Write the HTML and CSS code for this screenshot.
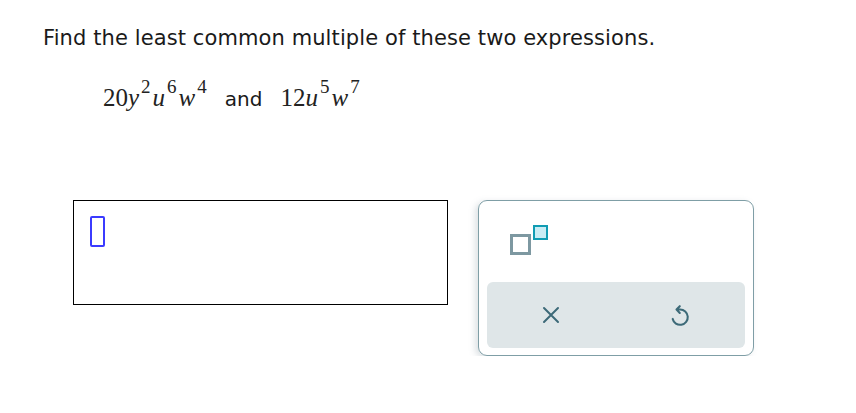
FILE: index.html
```html
<!DOCTYPE html>
<html>
<head>
<meta charset="utf-8">
<link rel="stylesheet" href="styles.css">
</head>
<body>
<div class="page">
  <p class="prompt">Find the least common multiple of these two expressions.</p>
  <div class="math">
    <span class="m">20<i>y</i><sup>2</sup><i>u</i><sup>6</sup><i>w</i><sup>4</sup></span>
    <span class="and">and</span>
    <span class="m">12<i>u</i><sup>5</sup><i>w</i><sup>7</sup></span>
  </div>
  <div class="work">
    <div class="answer"><span class="cursor"></span></div>
    <div class="panel">
      <div class="tools">
        <span class="supicon"><span class="base"></span><span class="exp"></span></span>
      </div>
      <div class="actions">
        <svg class="ic" width="20" height="20" viewBox="0 0 20 20"><path d="M3 3 L17 17 M17 3 L3 17" stroke="#3d6a78" stroke-width="2" fill="none" stroke-linecap="round"/></svg>
        <svg class="ic" width="24" height="24" viewBox="0 0 22 22"><path d="M4.3 14.6 A7 7 0 1 0 11 6 H8.2 M10.8 2.9 L7.8 6 L10.8 9.1" stroke="#3d6a78" stroke-width="1.9" fill="none" stroke-linecap="round" stroke-linejoin="round"/></svg>
      </div>
    </div>
  </div>
</div>
</body>
</html>
```
FILE: styles.css
```css
html, body { margin: 0; padding: 0; background: #fff; }
.page { padding: 22px 0 0 43px; font-family: "DejaVu Sans", Verdana, sans-serif; color: #1a1a1a; }
.prompt { margin: 0; font-size: 21px; line-height: 32px; letter-spacing: 0.1px; }
.math { margin: 30px 0 0 60px; display: flex; align-items: baseline; height: 40px; }
.m { font-family: "Liberation Serif", "Times New Roman", serif; font-size: 25px; color: #222; }
.m i { font-style: italic; }
.m sup { font-size: 19px; vertical-align: 0; position: relative; top: -13px; margin: 0 2px 0 2px; }
.and { font-size: 20px; margin: 0 18px 0 16px; }
.work { display: flex; gap: 31px; margin: 76px 0 0 30px; align-items: flex-start; }
.answer { box-sizing: border-box; width: 375px; height: 105px; border: 1px solid #000; padding: 15px 0 0 16px; }
.cursor { display: block; width: 15px; height: 31px; border: 2px solid #3b3bff; border-radius: 2px; box-sizing: border-box; }
.panel { width: 276px; height: 156px; box-sizing: border-box; border: 1px solid #7f9ea6; border-radius: 9px; box-shadow: -3px 2px 6px rgba(120,140,150,0.25); padding: 0 8px 7px 8px; display: flex; flex-direction: column; margin-left: -1px; }
.tools { height: 81px; position: relative; }
.supicon { position: absolute; left: 23px; top: 24px; width: 40px; height: 32px; }
.supicon .base { position: absolute; left: 0; top: 9px; width: 21px; height: 21px; box-sizing: border-box; border: 3px solid #7d98a1; background: #fff; }
.supicon .exp { position: absolute; left: 23px; top: 0; width: 15px; height: 15px; box-sizing: border-box; border: 2.5px solid #109cb3; background: #c9ecf4; }
.actions { flex: 1; background: #dfe6e8; border-radius: 6px; display: flex; justify-content: space-around; align-items: center; padding: 0 0 0 0; }
.ic { display: block; }
```
